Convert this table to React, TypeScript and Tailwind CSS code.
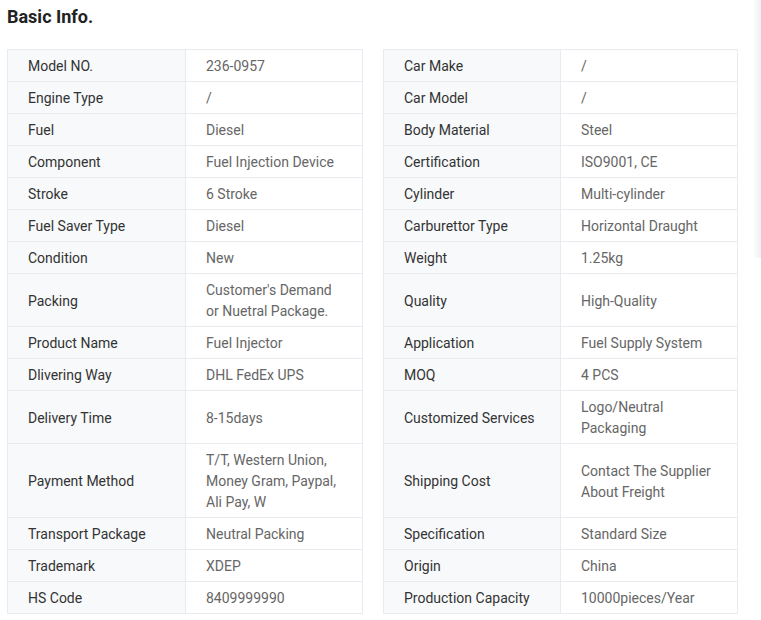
import type { ReactNode } from "react";

type Pair = [string, ReactNode];

const ROWS: [Pair, Pair][] = [
  [["Model NO.", "236-0957"], ["Car Make", "/"]],
  [["Engine Type", "/"], ["Car Model", "/"]],
  [["Fuel", "Diesel"], ["Body Material", "Steel"]],
  [["Component", "Fuel Injection Device"], ["Certification", "ISO9001, CE"]],
  [["Stroke", "6 Stroke"], ["Cylinder", "Multi-cylinder"]],
  [["Fuel Saver Type", "Diesel"], ["Carburettor Type", "Horizontal Draught"]],
  [["Condition", "New"], ["Weight", "1.25kg"]],
  [["Packing", "Customer's Demand or Nuetral Package."], ["Quality", "High-Quality"]],
  [["Product Name", "Fuel Injector"], ["Application", "Fuel Supply System"]],
  [["Dlivering Way", "DHL FedEx UPS"], ["MOQ", "4 PCS"]],
  [["Delivery Time", "8-15days"], ["Customized Services", "Logo/Neutral Packaging"]],
  [
    ["Payment Method", "T/T, Western Union, Money Gram, Paypal, Ali Pay, W"],
    ["Shipping Cost", "Contact The Supplier About Freight"],
  ],
  [["Transport Package", "Neutral Packing"], ["Specification", "Standard Size"]],
  [["Trademark", "XDEP"], ["Origin", "China"]],
  [["HS Code", "8409999990"], ["Production Capacity", "10000pieces/Year"]],
];

function Cells({ pair, first, wide }: { pair: Pair; first: boolean; wide: boolean }) {
  const [label, value] = pair;
  return (
    <div
      className={`grid border-x border-b border-[#e8ebf0] ${wide ? "grid-cols-[178px_1fr]" : "grid-cols-[177px_1fr]"} ${first ? "border-t" : ""}`}
    >
      <div className="flex items-center border-r border-[#e8ebf0] bg-[#f8f9fb] pb-[4px] pl-[20px] pr-[10px] pt-[6px] text-[#333333]">
        {label}
      </div>
      <div className="flex items-center bg-white pb-[4px] pl-[20px] pr-[20px] pt-[6px] text-[#666666]">
        {value}
      </div>
    </div>
  );
}

export default function App() {
  return (
    <div className="relative min-h-[620px] bg-white font-['Roboto',sans-serif]">
      <div className="w-[738px] pl-[7px] pt-[5px]">
        <h2 className="text-[18px] font-bold leading-[24px] text-[#222222]">Basic Info.</h2>
        <div className="mt-[20px] text-[14px] leading-[21px]">
          {ROWS.map(([left, right], i) => (
            <div key={left[0]} className="grid grid-cols-[356px_355px] gap-[20px]">
              <Cells pair={left} first={i === 0} wide />
              <Cells pair={right} first={i === 0} wide={false} />
            </div>
          ))}
        </div>
      </div>
      {/* edge of a floating panel */}
      <div className="absolute right-0 top-0 h-[258px] w-[7px] rounded-bl-[4px] bg-gradient-to-r from-[#fafbfc] to-[#eef0f4]" />
    </div>
  );
}
